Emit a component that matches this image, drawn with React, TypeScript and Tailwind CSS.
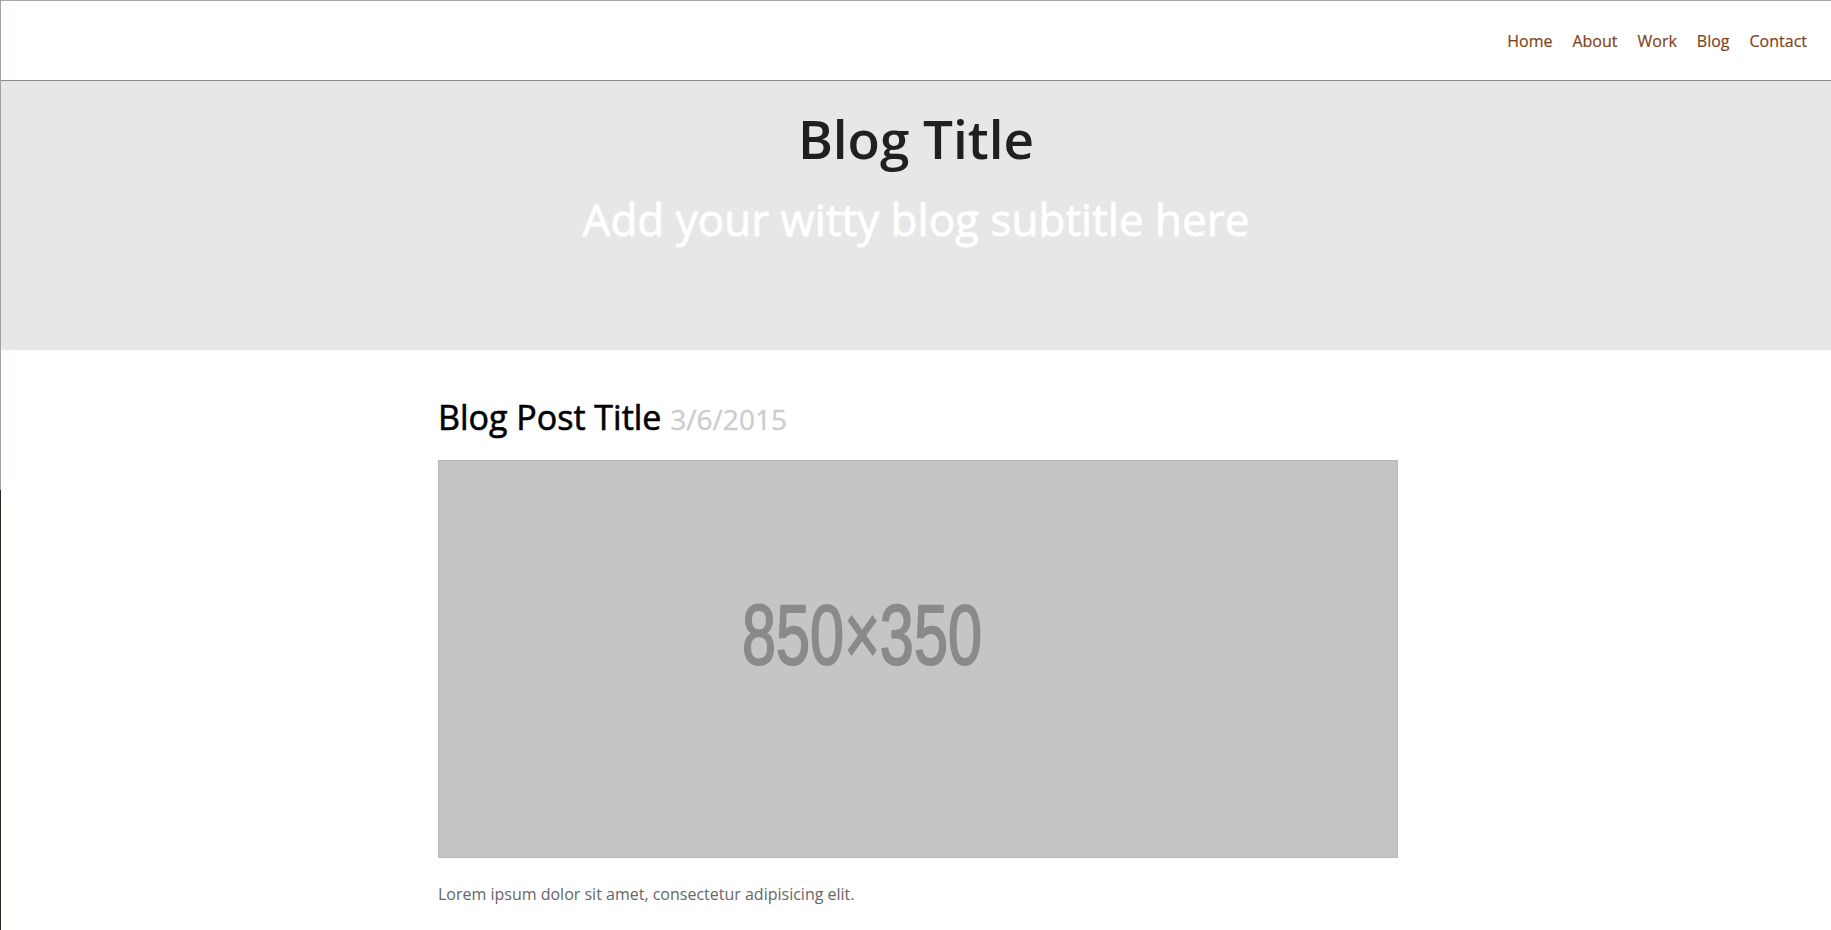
import React from "react";

const navItems = ["Home", "About", "Work", "Blog", "Contact"];

export default function App() {
  return (
    <div
      className="flex h-[930px] w-full overflow-hidden bg-white"
      style={{ fontFamily: '"Open Sans", "Noto Sans", sans-serif' }}
    >
      <div className="flex w-px flex-col">
        <div className="h-[490px] bg-[#9ea4a6]" />
        <div className="flex-1 bg-[#2b2620]" />
      </div>
      <div className="flex min-w-0 flex-1 flex-col">
        <nav className="flex h-[81px] items-center justify-end border-t border-b border-t-[#aaaaaa] border-b-[#8a8a8a] pr-[14px]">
          {navItems.map((item) => (
            <a
              key={item}
              href="#"
              className="px-[10px] text-[16px] leading-[24px] text-[#81431a] [-webkit-text-stroke:0.2px_#81431a]"
            >
              {item}
            </a>
          ))}
        </nav>
        <header className="h-[269px] rounded-bl-[3px] bg-[#e7e7e7] pt-[29px] text-center">
          <h1 className="text-[53px] font-semibold leading-[1.1] text-[#202020]">
            Blog Title
          </h1>
          <p className="mt-[27px] text-[44px] font-normal leading-[1.1] text-white [-webkit-text-stroke:0.8px_white]">
            Add your witty blog subtitle here
          </p>
        </header>
        <div className="flex justify-center pl-[4px]">
          <main className="w-[960px]">
            <h2 className="mt-[49px] text-[34px] font-normal leading-[1.1] text-black [-webkit-text-stroke:0.6px_black]">
              Blog Post Title{" "}
              <span className="text-[28px] font-normal text-[#cccccc] [-webkit-text-stroke:0.3px_#cccccc]">
                3/6/2015
              </span>
            </h2>
            <div className="relative mt-[24px] h-[398px] w-[960px] border border-[#b9b9b9] bg-[#c5c5c5]">
              <span
                className="absolute left-[423px] top-[173px] -translate-x-1/2 -translate-y-1/2 scale-x-[0.72] text-[85px] font-normal leading-none whitespace-nowrap text-[#8a8a8a] [-webkit-text-stroke:2px_#8a8a8a]"
                style={{ fontFamily: '"Liberation Sans", Arial, sans-serif' }}
              >
                850×350
              </span>
            </div>
            <p className="mt-[24px] text-[16px] leading-[24px] text-[#666666]">
              Lorem ipsum dolor sit amet, consectetur adipisicing elit.
            </p>
          </main>
        </div>
      </div>
    </div>
  );
}
